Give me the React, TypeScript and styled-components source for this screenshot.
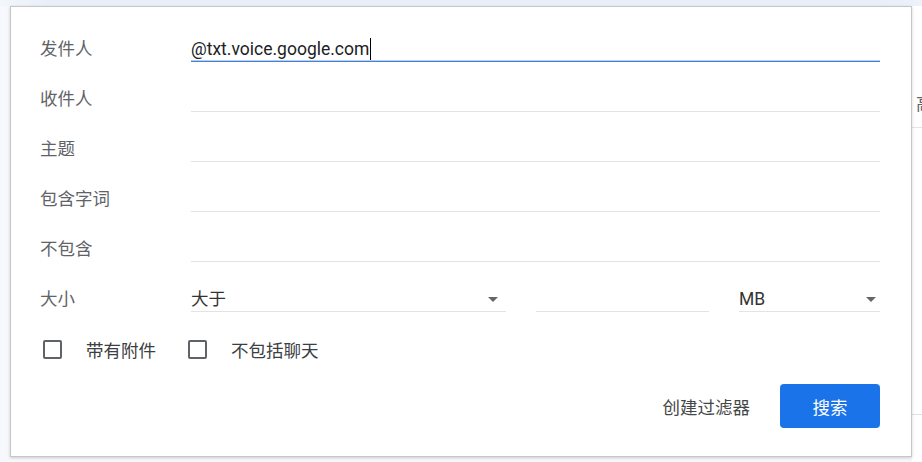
import React from "react";
import styled, { createGlobalStyle } from "styled-components";

const GlobalStyle = createGlobalStyle`
  html, body { margin: 0; padding: 0; }
  body {
    width: 922px;
    height: 462px;
    overflow: hidden;
    font-family: Roboto, "Noto Sans CJK SC", sans-serif;
  }
`;

const FONT = `Roboto, "Noto Sans CJK SC", sans-serif`;

const Page = styled.div`
  position: relative;
  width: 922px;
  height: 462px;
  display: grid;
  grid-template-columns: 912px 1fr;
  grid-template-rows: 6px 1fr;
  background: #f6f8fc;
  overflow: hidden;
`;

const TopStrip = styled.div`
  grid-column: 1 / -1;
  background: linear-gradient(90deg, #f3f6fb 0, #e9eef8 50px, #e9eef8 880px, #eef2f9 100%);
`;

const LeftPane = styled.div`
  background: #f6f8fc;
`;

const RightPane = styled.div`
  background: #fff;
  padding-top: 86px;
  font-family: ${FONT};
  font-size: 17.5px;
  color: #5f6368;
  white-space: nowrap;
  overflow: hidden;
`;

const PaneHeader = styled.div`
  line-height: 24px;
  padding: 0 0 11px 4px;
  border-bottom: 1px solid #e6e6e6;
`;

const PaneRow = styled.div`
  height: 286px;
  border-bottom: 1px solid #dfe1e5;
`;

const Dialog = styled.form`
  position: absolute;
  left: 10px;
  top: 6px;
  width: 902px;
  box-sizing: border-box;
  background: #fff;
  border: 1px solid #c6c6c6;
  box-shadow: 0 1px 3px rgba(0, 0, 0, 0.18);
  padding: 5px 31px 28px 29px;
  font-family: ${FONT};
  font-size: 17.5px;
`;

const FieldRow = styled.div`
  display: grid;
  grid-template-columns: 151px 1fr;
  align-items: end;
  height: 50px;
`;

const Label = styled.label`
  color: #5f6368;
  line-height: 24px;
  padding-bottom: 1px;
  white-space: nowrap;
`;

const Field = styled.div<{ $focused?: boolean }>`
  display: flex;
  align-items: center;
  height: 24px;
  line-height: 24px;
  color: #202124;
  border-bottom: 1px solid ${(p) => (p.$focused ? "#4a7fd6" : "#e3e3e3")};
  box-shadow: ${(p) => (p.$focused ? "inset 0 -1px 0 #b3cdf3" : "none")};
  white-space: nowrap;
`;

const Caret = styled.span`
  display: inline-block;
  width: 1px;
  height: 22px;
  margin-left: 1px;
  background: #000;
`;

const SizeControls = styled.div`
  display: grid;
  grid-template-columns: 315px 173px 141px;
  column-gap: 30px;
  align-items: end;
`;

const Select = styled(Field)<{ $arrowGap: number }>`
  justify-content: space-between;
  padding-right: ${(p) => p.$arrowGap}px;
  color: #333;
`;

const Arrow = styled.span`
  width: 0;
  height: 0;
  border-left: 5px solid transparent;
  border-right: 5px solid transparent;
  border-top: 5px solid #666;
`;

const CheckRow = styled.div`
  display: flex;
  align-items: center;
  gap: 32px;
  height: 50px;
  margin-top: 12px;
  padding-left: 3px;
`;

const CheckItem = styled.label`
  display: flex;
  align-items: center;
  gap: 24px;
  color: #3c4043;
  white-space: nowrap;
`;

const Box = styled.span`
  width: 19px;
  height: 19px;
  box-sizing: border-box;
  border: 2px solid #5f6368;
  border-radius: 2px;
`;

const ActionRow = styled.div`
  display: flex;
  justify-content: flex-end;
  align-items: center;
  gap: 30px;
  margin-top: 10px;
`;

const TextButton = styled.button`
  border: none;
  background: none;
  padding: 0;
  font-family: ${FONT};
  font-size: 17.5px;
  color: #444746;
  cursor: pointer;
`;

const PrimaryButton = styled.button`
  width: 100px;
  height: 44px;
  border: none;
  border-radius: 4px;
  background: #1a73e8;
  color: #fff;
  font-family: ${FONT};
  font-size: 17.5px;
  cursor: pointer;
`;

const textRows = [
  { label: "发件人", value: "@txt.voice.google.com", focused: true },
  { label: "收件人", value: "" },
  { label: "主题", value: "" },
  { label: "包含字词", value: "" },
  { label: "不包含", value: "" },
];

export default function App() {
  return (
    <>
      <GlobalStyle />
      <Page>
        <TopStrip />
        <LeftPane />
        <RightPane>
          <PaneHeader>高级搜索</PaneHeader>
          <PaneRow />
        </RightPane>
        <Dialog onSubmit={(e) => e.preventDefault()}>
          {textRows.map((r) => (
            <FieldRow key={r.label}>
              <Label>{r.label}</Label>
              <Field $focused={r.focused}>
                {r.value}
                {r.focused && <Caret />}
              </Field>
            </FieldRow>
          ))}
          <FieldRow>
            <Label>大小</Label>
            <SizeControls>
              <Select $arrowGap={8}>
                大于
                <Arrow />
              </Select>
              <Field />
              <Select $arrowGap={4}>
                MB
                <Arrow />
              </Select>
            </SizeControls>
          </FieldRow>
          <CheckRow>
            <CheckItem>
              <Box />
              带有附件
            </CheckItem>
            <CheckItem>
              <Box />
              不包括聊天
            </CheckItem>
          </CheckRow>
          <ActionRow>
            <TextButton type="button">创建过滤器</TextButton>
            <PrimaryButton type="submit">搜索</PrimaryButton>
          </ActionRow>
        </Dialog>
      </Page>
    </>
  );
}
